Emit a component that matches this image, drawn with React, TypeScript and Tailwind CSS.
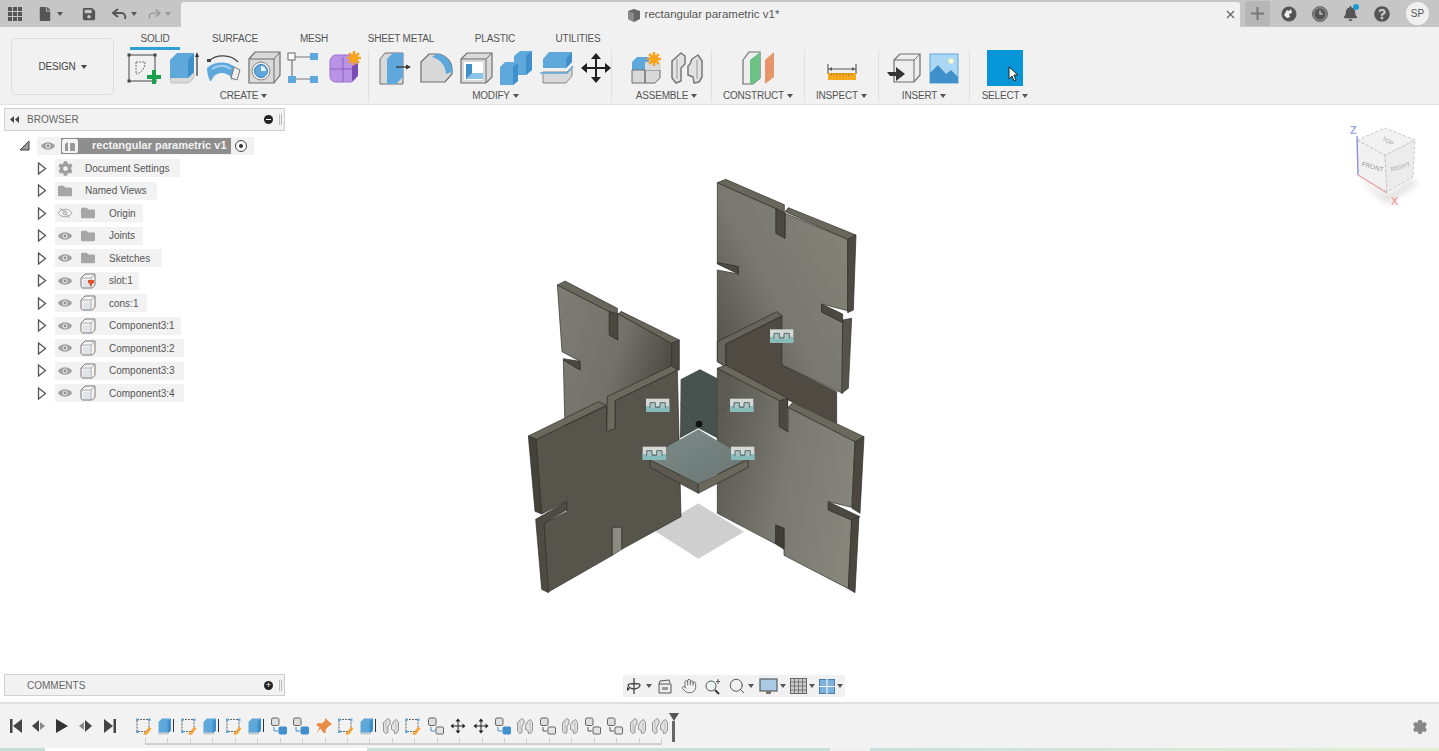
import { Hand, Search, Settings } from "lucide-react";
import { FaBell, FaCog, FaFile, FaFolder, FaQuestionCircle, FaSave } from "react-icons/fa";
import type { ReactNode } from "react";

const BLUE = "#5fa8dc";
const BLUE_D = "#3f8fcb";
const GRAY = "#d9d9d9";
const EDGE = "#6e6e6e";

function Icon({ children, size = 36 }: { children: ReactNode; size?: number }) {
  return (
    <svg width={size} height={size} viewBox="0 0 36 36" className="shrink-0">
      {children}
    </svg>
  );
}

function Caret({ className = "border-t-[#555]" }: { className?: string }) {
  return <span className={`inline-block w-0 h-0 border-x-[3px] border-x-transparent border-t-[4px] ${className}`} />;
}

const Star = ({ x, y, r = 6 }: { x: number; y: number; r?: number }) => (
  <g>
    {[0, 45, 90, 135].map((a) => (
      <rect key={a} x={x - r} y={y - 1.2} width={r * 2} height={2.4} fill="#f6a21c" transform={`rotate(${a} ${x} ${y})`} />
    ))}
    <circle cx={x} cy={y} r={r * 0.62} fill="#f9a51e" />
  </g>
);

/* ribbon icons */
const SketchIcon = () => (
  <Icon>
    <rect x="3" y="5" width="26" height="26" fill="none" stroke="#555" strokeWidth="1.1" />
    {[[3, 5], [29, 5], [3, 31], [29, 31]].map(([x, y]) => (
      <rect key={`${x}${y}`} x={x - 1.5} y={y - 1.5} width="3" height="3" fill="#444" />
    ))}
    <path d="M10 12h9M10 12v12M19 12c0 7-4 11-9 12" fill="none" stroke="#777" strokeWidth="1" strokeDasharray="2 1" />
    <path d="M26 20h4v5h5v4h-5v5h-4v-5h-5v-4h5z" fill="#17a24a" />
  </Icon>
);
const ExtrudeIcon = () => (
  <Icon>
    <path d="M4 28l1 5h17l6-5v-6z" fill={GRAY} stroke="#aaa" strokeWidth=".6" />
    <path d="M4 10l7-7h17v19l-6 6H4z" fill={BLUE} />
    <path d="M22 10l6-7v19l-6 6z" fill={BLUE_D} />
    <path d="M31 26V5" stroke="#333" strokeWidth="1.2" />
    <path d="M29 7l2-5 2 5z" fill="#333" />
  </Icon>
);
const SweepIcon = () => (
  <Icon>
    <path d="M3 11c7-7 22-7 29 1" fill="none" stroke="#444" strokeWidth="1.2" />
    <rect x="1" y="9" width="4" height="3" fill="#444" />
    <path d="M1 18c8-7 20-7 28-1l-3 14-2-5c-5-4-11-4-16 0l-3 5H4c-2-4-3-9-3-13z" fill={BLUE} />
    <path d="M6 19c6-4 13-4 19 0" fill="none" stroke="#a5d2f0" strokeWidth="2" />
    <path d="M28 17l6 3-3 10-6-2z" fill="#eee" stroke="#777" strokeWidth="1" />
  </Icon>
);
const HoleIcon = () => (
  <Icon>
    <path d="M3 9l6-7h25v23l-6 8H3z" fill={GRAY} stroke={EDGE} strokeWidth="1.2" />
    <path d="M3 9h25l6-7M28 9v24" fill="none" stroke={EDGE} strokeWidth="1" />
    <circle cx="15" cy="21" r="9" fill="#eee" stroke="#888" />
    <circle cx="15" cy="21" r="6.5" fill={BLUE} stroke="#3d7fb0" />
    <path d="M15 16a5 5 0 0 1 5 5h-5z" fill="#e8f2fa" />
  </Icon>
);
const FormIcon = () => (
  <Icon>
    <path d="M9 7h15M6 10v16M9 29h15" stroke="#777" strokeWidth="1.2" />
    <rect x="2" y="3" width="7" height="7" fill="#fff" stroke="#666" />
    <rect x="24" y="3" width="8" height="7" fill={BLUE} />
    <rect x="2" y="26" width="8" height="7" fill={BLUE} />
    <rect x="24" y="26" width="8" height="7" fill={BLUE} />
  </Icon>
);
const SolidFormIcon = () => (
  <Icon>
    <path d="M4 11c0-3 3-6 6-6h16c2 0 4 2 4 5v16c0 3-3 6-6 6H10c-4 0-6-3-6-6z" fill="#b993e6" stroke="#9a6fd0" />
    <path d="M4 19h26M17 7v25" stroke="#8a5ec4" strokeWidth="1" />
    <path d="M26 16l6-3v13l-6 5z" fill="#7a4bb5" />
    <Star x={28} y={8} r={7} />
  </Icon>
);
const PressPullIcon = () => (
  <Icon>
    <path d="M2 9l5-6h18v31H2z" fill={GRAY} stroke={EDGE} />
    <path d="M9 9l6-6h10v24l-7 7H9z" fill={BLUE} />
    <path d="M18 17h11" stroke="#333" strokeWidth="1.3" />
    <path d="M28 14.5l5 2.5-5 2.5z" fill="#333" />
  </Icon>
);
const FilletIcon = () => (
  <Icon>
    <path d="M3 12l8-8h10c8 2 13 9 13 15v5l-7 8H3z" fill={GRAY} stroke={EDGE} strokeWidth="1.2" />
    <path d="M18 4h3c8 2 13 9 13 15v3l-6 2c0-7-5-15-14-17z" fill={BLUE} />
  </Icon>
);
const ShellIcon = () => (
  <Icon>
    <path d="M3 9l6-6h25v24l-6 6H3z" fill={GRAY} stroke={EDGE} strokeWidth="1.2" />
    <path d="M3 9h25l6-6M28 9v24" fill="none" stroke={EDGE} />
    <rect x="6" y="12" width="19" height="18" fill="#fff" />
    <path d="M8 14h6v9h11v6H8z" fill={BLUE_D} />
    <path d="M14 23h11v6H8z" fill="#8cc3eb" />
  </Icon>
);
const CombineIcon = () => (
  <Icon>
    <path d="M2 17l5-5h9V6l6-5h12v19l-6 5h-8v6l-5 4H2z" fill={BLUE} />
    <path d="M28 6l6-5v19l-6 5z" fill={BLUE_D} />
    <path d="M15 17l5-4v18l-5 4z" fill={BLUE_D} />
  </Icon>
);
const SplitIcon = () => (
  <Icon>
    <path d="M5 22h24l5-5v9l-6 7H5z" fill={GRAY} stroke="#888" />
    <path d="M29 22l5-5" stroke="#888" />
    <path d="M5 9l6-7h23v10l-6 6H5z" fill={BLUE} />
    <path d="M28 9l6-7v10l-6 6z" fill={BLUE_D} />
    <path d="M2 23h27l6-7" fill="none" stroke={BLUE} strokeWidth="1.4" />
  </Icon>
);
const MoveIcon = ({ s = 1 }: { s?: number }) => (
  <Icon size={36 * s}>
    <path d="M18 6v24M6 18h24" stroke="#222" strokeWidth="2" />
    <path d="M18 3l5 6H13zM18 33l5-6H13zM3 18l6-5v10zM33 18l-6-5v10z" fill="#222" />
  </Icon>
);
const ComponentNew = () => (
  <Icon>
    <path d="M3 12l5-5h12v13H3z" fill={BLUE} />
    <path d="M3 20h13v13H3zM16 20h15v8l-5 5H16z" fill={GRAY} stroke={EDGE} />
    <path d="M16 12h13l3 3v5H16z" fill={GRAY} />
    <Star x={25} y={9} r={7} />
  </Icon>
);
const JointIcon = ({ s = 1 }: { s?: number }) => (
  <Icon size={36 * s}>
    <path d="M3 11L12 3l4 3v8l-4 4v13l-5 2-4-5z" fill="#e2e2e2" stroke="#777" strokeWidth="1.5" strokeLinejoin="round" />
    <path d="M33 11l-4-6-6 4-2 5-2 2v9l5 2 1 6 5-1 3-5z" fill="#e2e2e2" stroke="#777" strokeWidth="1.5" strokeLinejoin="round" />
    <path d="M8 9v20M28 10v19" stroke="#999" strokeWidth="1" />
  </Icon>
);
const PlaneIcon = () => (
  <Icon>
    <path d="M3 10l6-8h11v26l-7 6H3z" fill="#eee" stroke={EDGE} strokeWidth="1.2" />
    <path d="M10 10l10-8v26l-7 6h-3z" fill="#6cc285" />
    <path d="M25 10l9-8v25l-9 7z" fill="#e6956a" />
  </Icon>
);
const RulerIcon = () => (
  <Icon>
    <path d="M4 14v10M32 14v10M4 19h28" stroke="#555" strokeWidth="1.1" />
    <path d="M5 19l3-2v4zM31 19l-3-2v4z" fill="#555" />
    <rect x="4" y="23" width="28" height="7" fill="#f4a91f" />
    <path d="M7 23v3M10 23v2M13 23v3M16 23v2M19 23v3M22 23v2M25 23v3M28 23v2" stroke="#9a6a12" strokeWidth=".8" />
  </Icon>
);
const InsertIcon = () => (
  <Icon>
    <path d="M8 10l6-6h20v21l-6 7H8z" fill="#eee" stroke={EDGE} strokeWidth="1.2" />
    <path d="M8 10h20l6-6M28 10v22" fill="none" stroke={EDGE} />
    <path d="M1 22l9 0v-5l9 7-9 7v-5H4z" fill="#333" />
  </Icon>
);
const ImageIcon = () => (
  <Icon>
    <rect x="4" y="4" width="28" height="29" fill="#a9d7f4" stroke="#5fa8dc" />
    <circle cx="25" cy="11" r="2.6" fill="#fff6c8" />
    <path d="M4 33V23l8-8 8 9 5-4 7 7v6z" fill="#3f8fcb" />
  </Icon>
);

const groups = [
  { label: "CREATE", cls: "w-[245px] pr-[5px]", icons: [SketchIcon, ExtrudeIcon, SweepIcon, HoleIcon, FormIcon, SolidFormIcon] },
  { label: "MODIFY", cls: "w-[243px] pl-[11px]", icons: [PressPullIcon, FilletIcon, ShellIcon, CombineIcon, SplitIcon, MoveIcon] },
  { label: "ASSEMBLE", cls: "w-[100px] pl-[10px]", icons: [ComponentNew, JointIcon] },
  { label: "CONSTRUCT", cls: "w-[93px]", icons: [PlaneIcon] },
  { label: "INSPECT", cls: "w-[74px]", icons: [RulerIcon] },
  { label: "INSERT", cls: "w-[91px]", icons: [InsertIcon, ImageIcon] },
];

const tabs = [
  { name: "SOLID", cls: "w-[50px] text-[#3a9bd5] border-b-[3px] border-[#2f9fd8]" },
  { name: "SURFACE", cls: "w-[60px] ml-[25px]" },
  { name: "MESH", cls: "w-[40px] ml-[29px]" },
  { name: "SHEET METAL", cls: "w-[80px] ml-[27px]" },
  { name: "PLASTIC", cls: "w-[50px] ml-[29px]" },
  { name: "UTILITIES", cls: "w-[50px] ml-[33px]" },
];

function TopBar() {
  return (
    <div className="h-[27px] bg-[#c6c6c6] flex items-end shrink-0">
      <div className="w-[181px] h-[27px] flex items-center text-[#555]">
        <svg width="14" height="14" viewBox="0 0 14 14" className="ml-[8px]">
          {[0, 5, 10].map((x) => [0, 5, 10].map((y) => <rect key={`${x}-${y}`} x={x} y={y} width="4" height="4" fill="#555" />))}
        </svg>
        <FaFile className="ml-[17px] w-[12px] h-[14px]" />
        <span className="ml-[6px] flex"><Caret /></span>
        <FaSave className="ml-[19px] w-[14px] h-[14px]" />
        <svg width="16" height="12" viewBox="0 0 16 12" className="ml-[16px]"><path d="M6 1L1 5l5 4M1 5h8c3 0 5 2 4 6" fill="none" stroke="#555" strokeWidth="2" /></svg>
        <span className="ml-[3px] flex"><Caret /></span>
        <svg width="14" height="12" viewBox="0 0 16 12" className="ml-[10px]"><path d="M10 1l5 4-5 4M15 5H7C4 5 2 7 3 11" fill="none" stroke="#999" strokeWidth="1.6" /></svg>
        <span className="ml-[4px] flex"><Caret className="border-t-[#999]" /></span>
      </div>
      <div className="w-[1059px] h-[25px] bg-[#f1f1f1] rounded-t-[3px] flex items-center relative">
        <div className="flex-1 flex justify-center items-center gap-[4px] pl-[5px]">
          <svg width="14" height="14" viewBox="0 0 14 14"><path d="M1 3l6-2 6 2v8l-6 3-6-3z" fill="#666" /><path d="M1 3l6 2v9l-6-3z" fill="#8b8b8b" /></svg>
          <span className="text-[11.5px] text-[#555]">rectangular parametric v1*</span>
        </div>
        <span className="w-[20px] flex justify-center">
          <svg width="9" height="9" viewBox="0 0 9 9"><path d="M1 1l7 7M8 1L1 8" stroke="#666" strokeWidth="1.3" /></svg>
        </span>
      </div>
      <div className="flex-1 h-[27px] flex items-center">
        <div className="ml-[5px] w-[25px] h-[25px] bg-[#b6b6b6] rounded-[2px] flex items-center justify-center">
          <svg width="13" height="13" viewBox="0 0 13 13"><path d="M6.5 0v13M0 6.5h13" stroke="#777" strokeWidth="2" /></svg>
        </div>
        <svg width="16" height="16" viewBox="0 0 16 16" className="ml-[11px]">
          <circle cx="8" cy="8" r="7.5" fill="#555" />
          <path d="M3 9l3-5 2 1 2-2 1 4-3 1 1 3-3 1z" fill="#eee" />
        </svg>
        <svg width="16" height="16" viewBox="0 0 16 16" className="ml-[15px]">
          <circle cx="8" cy="8" r="7.5" fill="#888" stroke="#666" />
          <circle cx="8" cy="8" r="5.5" fill="#555" />
          <path d="M8 4.5V8h3" fill="none" stroke="#ddd" strokeWidth="1.2" />
        </svg>
        <span className="ml-[15px] relative flex">
          <FaBell className="w-[15px] h-[15px] text-[#555]" />
          <span className="absolute -top-[2px] -right-[1px] w-[6px] h-[6px] rounded-full bg-[#1a9ad6]" />
        </span>
        <FaQuestionCircle className="ml-[16px] w-[16px] h-[16px] text-[#555]" />
        <div className="ml-[16px] w-[23px] h-[23px] rounded-full bg-[#f0f0f0] flex items-center justify-center text-[10px] text-[#555]">SP</div>
      </div>
    </div>
  );
}

function Ribbon() {
  return (
    <div className="h-[78px] bg-[#f1f1f1] border-b border-[#e2e2e2] flex shrink-0">
      <div className="ml-[11px] mt-[11px] w-[103px] h-[57px] border border-[#dcdcdc] rounded-[4px] flex items-center justify-center gap-[5px] text-[10px] tracking-[-0.2px] text-[#444]">
        DESIGN <Caret className="border-t-[#444]" />
      </div>
      <div className="ml-[10px] flex flex-col">
        <div className="flex ml-[6px] h-[23px]">
          {tabs.map((t) => (
            <div key={t.name} className={`h-[23px] pt-[5px] text-center text-[10px] tracking-[-0.2px] text-[#555] leading-[14px] ${t.cls}`}>
              {t.name}
            </div>
          ))}
        </div>
        <div className="flex h-[52px]">
          {groups.map((g) => (
            <div key={g.label} className={`flex flex-col items-center border-r border-[#e0e0e0] ${g.cls}`}>
              <div className="flex gap-[4px] h-[36px] items-center">
                {g.icons.map((Ic, i) => <Ic key={i} />)}
              </div>
              <div className="mt-[3px] flex items-center gap-[3px] text-[10px] tracking-[-0.2px] text-[#555] leading-[13px]">
                {g.label} <Caret />
              </div>
            </div>
          ))}
          <div className="w-[70px] flex flex-col items-center">
            <div className="w-[36px] h-[36px] shrink-0 bg-[#0696d7] relative">
              <svg width="13" height="17" viewBox="0 0 13 17" className="absolute left-[20px] top-[16px]">
                <path d="M2 1v12l3-3 2 5 2-1-2-5h4z" fill="#fff" stroke="#222" strokeWidth="1" />
              </svg>
            </div>
            <div className="mt-[3px] flex items-center gap-[3px] text-[10px] tracking-[-0.2px] text-[#555] leading-[13px]">
              SELECT <Caret />
            </div>
          </div>
        </div>
      </div>
    </div>
  );
}

const Eye = ({ off = false }: { off?: boolean }) => (
  <svg width="16" height="10" viewBox="0 0 16 10" className="shrink-0">
    {off ? (
      <>
        <path d="M1 5c3-5 11-5 14 0-3 5-11 5-14 0z" fill="none" stroke="#aaa" />
        <circle cx="8" cy="5" r="2" fill="none" stroke="#aaa" />
        <path d="M3 0l10 10" stroke="#aaa" />
      </>
    ) : (
      <>
        <path d="M1 5c3-5 11-5 14 0-3 5-11 5-14 0z" fill="#a0a0a0" />
        <circle cx="8" cy="5" r="2.5" fill="#e8e8e8" />
        <circle cx="8" cy="5" r="1.4" fill="#909090" />
      </>
    )}
  </svg>
);

const Expand = () => (
  <svg width="10" height="13" viewBox="0 0 10 13" className="shrink-0">
    <path d="M1.5 1l7 5.5-7 5.5z" fill="#fff" stroke="#555" strokeWidth="1.3" />
  </svg>
);

const CompCube = ({ pin = false }: { pin?: boolean }) => (
  <svg width="16" height="16" viewBox="0 0 16 16" className="shrink-0">
    <path d="M1 5l4-4h10v10c0 2-2 4-4 4H3c-1 0-2-1-2-2z" fill="#f4f4f4" stroke="#777" />
    <path d="M1 5h10v10M11 5l4-4" fill="none" stroke="#999" strokeWidth=".8" />
    <rect x="3" y="7" width="7" height="7" fill="#dfe4ea" />
    {pin && <path d="M8 7h6v3l-2 1v2h-2v-2L8 10z" fill="#e0532b" />}
  </svg>
);

const Folder = () => <FaFolder className="w-[16px] h-[14px] text-[#a6a6a6] shrink-0" />;

const rows: { label: string; w: string; eye?: "on" | "off"; icon: ReactNode }[] = [
  { label: "Document Settings", w: "w-[125px]", icon: <FaCog className="w-[15px] h-[15px] text-[#a0a0a0] shrink-0" /> },
  { label: "Named Views", w: "w-[102px]", icon: <Folder /> },
  { label: "Origin", w: "w-[88px]", eye: "off", icon: <Folder /> },
  { label: "Joints", w: "w-[88px]", eye: "on", icon: <Folder /> },
  { label: "Sketches", w: "w-[107px]", eye: "on", icon: <Folder /> },
  { label: "slot:1", w: "w-[84px]", eye: "on", icon: <CompCube pin /> },
  { label: "cons:1", w: "w-[92px]", eye: "on", icon: <CompCube /> },
  { label: "Component3:1", w: "w-[126px]", eye: "on", icon: <CompCube /> },
  { label: "Component3:2", w: "w-[129px]", eye: "on", icon: <CompCube /> },
  { label: "Component3:3", w: "w-[129px]", eye: "on", icon: <CompCube /> },
  { label: "Component3:4", w: "w-[129px]", eye: "on", icon: <CompCube /> },
];

function BrowserPanel() {
  return (
    <div className="absolute left-[4px] top-[3px] w-[281px] flex flex-col">
      <div className="h-[23px] bg-[#f2f2f2] border border-[#cfcfcf] flex items-center text-[10px] text-[#666]">
        <svg width="9" height="7" viewBox="0 0 9 7" className="ml-[5px]"><path d="M4 0v7L0 3.5zM9 0v7L5 3.5z" fill="#444" /></svg>
        <span className="ml-[8px] flex-1">BROWSER</span>
        <span className="w-[9px] h-[9px] rounded-full bg-[#222] flex items-center justify-center"><span className="w-[5px] h-[1px] bg-white" /></span>
        <span className="ml-[6px] mr-[2px] w-[3px] h-[11px] border-l border-r border-[#bbb]" />
      </div>
      {/* root node */}
      <div className="mt-[3px] h-[23px] flex items-center">
        <svg width="11" height="11" viewBox="0 0 11 11" className="ml-[15px]"><path d="M10 1v9H1z" fill="#999" stroke="#444" /></svg>
        <div className="ml-[7px] w-[217px] h-[18px] bg-[#f2f2f2] flex items-center">
          <span className="ml-[3px]"><Eye /></span>
          <div className="ml-[5px] w-[170px] h-[16px] bg-[#8e8e8e] flex items-center">
            <span className="ml-[1px] w-[16px] h-[14px] bg-[#f4f4f4] rounded-[2px] flex items-center justify-center">
              <svg width="12" height="12" viewBox="0 0 12 12"><path d="M1 4l3-2v9H1zM6 3h4l1 1v7H6z" fill="#999" /></svg>
            </span>
            <span className="ml-[14px] text-[11px] font-bold text-[#f2f2f2] whitespace-nowrap">rectangular parametric v1</span>
          </div>
          <svg width="14" height="14" viewBox="0 0 14 14" className="ml-[3px]"><circle cx="7" cy="7" r="5.5" fill="#fff" stroke="#444" /><circle cx="7" cy="7" r="2" fill="#333" /></svg>
        </div>
      </div>
      {rows.map((r) => (
        <div key={r.label} className="h-[22.5px] flex items-center">
          <span className="ml-[33px] flex"><Expand /></span>
          <div className={`ml-[8px] h-[18px] bg-[#f2f2f2] flex items-center text-[10px] text-[#555] ${r.w}`}>
            {r.eye ? (
              <>
                <span className="ml-[2px] flex"><Eye off={r.eye === "off"} /></span>
                <span className="ml-[7px] w-[16px] flex justify-center">{r.icon}</span>
                <span className="ml-[13px] whitespace-nowrap">{r.label}</span>
              </>
            ) : (
              <>
                <span className="ml-[2px] w-[16px] flex justify-center">{r.icon}</span>
                <span className="ml-[12px] whitespace-nowrap">{r.label}</span>
              </>
            )}
          </div>
        </div>
      ))}
    </div>
  );
}

const JointMark = ({ x, y }: { x: number; y: number }) => (
  <g transform={`translate(${x} ${y})`}>
    <rect width="70" height="40" fill="#d4d9d8" />
    <rect y="22" width="70" height="18" fill="#86bdbb" />
    <path d="M12 28V12h16v14h14V12h16v16" fill="#a9c4c3" stroke="#5b6a6a" strokeWidth="3" />
  </g>
);

/* coordinates are in 3x pixels, the picture's crop at 520,170 */
function Model() {
  const outline = { stroke: "#2b2a26", strokeWidth: 2, strokeLinejoin: "round" as const };
  return (
    <svg width="350" height="430" viewBox="0 0 1050 1290" className="absolute left-[520px] top-[65px]">
      <defs>
        <linearGradient id="backFace" x1="1" y1="0.1" x2="0.1" y2="0.9">
          <stop offset="0" stopColor="#84847a" />
          <stop offset="0.6" stopColor="#787870" />
          <stop offset="1" stopColor="#55534b" />
        </linearGradient>
        <linearGradient id="backLeft" x1="0" y1="0.2" x2="1" y2="0.6">
          <stop offset="0" stopColor="#7c7c74" />
          <stop offset="0.55" stopColor="#72726a" />
          <stop offset="1" stopColor="#4a4a42" />
        </linearGradient>
        <linearGradient id="frontRight" x1="0" y1="0.3" x2="1" y2="0.6">
          <stop offset="0" stopColor="#5c5a52" />
          <stop offset="0.5" stopColor="#7a7a72" />
          <stop offset="1" stopColor="#85857c" />
        </linearGradient>
        <linearGradient id="floorTop" x1="0" y1="0" x2="1" y2="1">
          <stop offset="0" stopColor="#7e8c8a" />
          <stop offset="1" stopColor="#687573" />
        </linearGradient>
      </defs>

      {/* floor shadow */}
      <path d="M400 1080L535 1000 672 1085 535 1166z" fill="#cfcfcf" />

      {/* back right plate */}
      <path d="M592 38L768 116V190L795 205V130L983 208V422L905 402V426L968 458V670L785 585V440L617 520V590L592 575V300L655 312V290L592 278z" fill="url(#backFace)" {...outline} />
      <path d="M592 38L617 28 793 104V125L795 130 768 116zM795 125L805 113 1008 195 983 208z" fill="#69665b" {...outline} />
      <path d="M983 208L1008 195 1000 420 983 428z" fill="#4c4a42" {...outline} />
      <path d="M768 116L795 130V205L768 190z" fill="#4b4840" {...outline} />
      <path d="M592 278L655 290V312L592 282z" fill="#4b4840" {...outline} />
      <path d="M968 450L995 445 985 655 965 670z" fill="#55534a" {...outline} />
      <path d="M905 402L968 432V458L905 426z" fill="#4b4840" {...outline} />

      {/* perpendicular inner plate */}
      <path d="M617 522L785 440V585L950 665V760L617 600z" fill="#4f4b43" {...outline} />
      <path d="M592 515L770 425 787 437 617 522V590L592 575z" fill="#66635a" {...outline} />

      {/* back left plate */}
      <path d="M112 345L268 425V495L293 510V430L455 520V640L260 720V780H135L130 570 180 600V574L126 545z" fill="url(#backLeft)" {...outline} />
      <path d="M112 345L135 333 292 415V432L268 425zM295 432L303 424 478 510 455 520z" fill="#69665b" {...outline} />
      <path d="M268 425L293 432V510L268 495z" fill="#4b4840" {...outline} />
      <path d="M455 520L478 510V600L455 600z" fill="#4b4840" {...outline} />
      <path d="M130 566L180 574V600L130 570z" fill="#4b4840" {...outline} />

      {/* gap behind the floor plate */}
      <path d="M482 628L540 598 592 625V805L535 775 480 805z" fill="#48534f" />

      {/* front left plate */}
      <path d="M48 808L260 708V785L285 775V692L472 600 483 1040 305 1138V1072L277 1072V1156L85 1266 72 1060 140 1025V995L65 1032z" fill="#57544b" {...outline} />
      <path d="M25 798L235 695 258 706 48 808zM262 680L455 587 472 600 285 692V775L260 785z" fill="#6b685d" {...outline} />
      <path d="M25 798L48 808 65 1032 45 1024z" fill="#45423a" {...outline} />
      <path d="M47 1048L140 995V1020L72 1060 85 1268 65 1258z" fill="#4e4b42" {...outline} />
      <path d="M277 1072L305 1072V1138L277 1156z" fill="#8b8b82" {...outline} />

      {/* front right plate */}
      <path d="M592 595L778 692V770L805 785V712L1005 815 995 1012 925 995V1020L995 1050 985 1256 792 1156V1075L767 1065V1122L592 1030z" fill="url(#frontRight)" {...outline} />
      <path d="M592 595L617 585 803 685V712L778 692zM805 712L817 698 1032 800 1005 815z" fill="#6b685d" {...outline} />
      <path d="M778 692L803 685V785L778 770z" fill="#4b4840" {...outline} />
      <path d="M1005 815L1032 800 1020 1030 996 1015z" fill="#4a473f" {...outline} />
      <path d="M925 995L1020 1040 995 1050 925 1020z" fill="#4b4840" {...outline} />
      <path d="M995 1050L1017 1040 1005 1268 985 1256z" fill="#4a473f" {...outline} />
      <path d="M767 1065L792 1075V1138L767 1122z" fill="#3f3d36" {...outline} />

      {/* floor plate sits in front of the inner corners */}
      <path d="M438 832L535 778 680 865 535 942 390 870z" fill="url(#floorTop)" />
      <path d="M390 870L535 942V970L390 892z" fill="#5c5a50" {...outline} />
      <path d="M535 942L685 868V892L535 970z" fill="#6a675c" {...outline} />
      <path d="M440 830L537 762 640 700M537 762L640 835M537 762L480 700" stroke="#38403e" strokeWidth="1.5" strokeDasharray="8 5" fill="none" />
      <circle cx="537" cy="762" r="10" fill="#111" />

      <JointMark x={750} y={478} />
      <JointMark x={378} y={686} />
      <JointMark x={630} y={686} />
      <JointMark x={368} y={830} />
      <JointMark x={633} y={830} />
    </svg>
  );
}

function ViewCube() {
  return (
    <svg width="80" height="90" viewBox="0 0 80 90" className="absolute left-[1345px] top-[16px]">
      <path d="M14 58l28 16 26-16 4 5-30 20z" fill="#dedede" className="blur-[3px]" />
      <path d="M12 19l28 15 2 37-29-17z" fill="#f1f1f1" stroke="#bdbdbd" strokeDasharray="3 2" strokeWidth=".8" />
      <path d="M40 34l30-15-2 37-26 15z" fill="#ececec" stroke="#bdbdbd" strokeDasharray="3 2" strokeWidth=".8" />
      <path d="M12 19L40 7l30 12-30 15z" fill="#f2f2f2" stroke="#bdbdbd" strokeDasharray="3 2" strokeWidth=".8" />
      <text x="42" y="22" fontSize="6" fill="#aaa" textAnchor="middle" transform="rotate(30 42 22)">TOP</text>
      <text x="27" y="48" fontSize="6.500" fill="#999" textAnchor="middle" transform="rotate(16 27 48)">FRONT</text>
      <text x="56" y="48" fontSize="6.500" fill="#aaa" textAnchor="middle" transform="rotate(-16 56 48)">RIGHT</text>
      <path d="M12 15l1 39" stroke="#8d8cea" strokeWidth="1.3" />
      <path d="M13 54l29 18" stroke="#efa3a3" strokeWidth="1.3" />
      <text x="5" y="13" fontSize="11" fontWeight="bold" fill="#a5a4f0">Z</text>
      <text x="46" y="84" fontSize="11" fontWeight="bold" fill="#f5a5a5">X</text>
    </svg>
  );
}

function NavBar() {
  return (
    <div className="absolute left-[623px] bottom-[5px] w-[222px] h-[22px] bg-[#f1f1f1] flex items-center text-[#555]">
      <svg width="18" height="18" viewBox="0 0 18 18" className="ml-[2px]">
        <path d="M9 1v16M3 8c0-2 12-2 12 0s-3 4-6 4-6-2-6-4z" fill="none" stroke="#444" strokeWidth="1.3" />
        <path d="M2 10l3 2-3 2z" fill="#333" />
      </svg>
      <span className="ml-[3px] flex"><Caret /></span>
      <svg width="16" height="15" viewBox="0 0 16 15" className="ml-[5px]">
        <path d="M2 5h12v9H2zM2 5l1-3 9-1 1 3" fill="#eee" stroke="#555" />
        <rect x="5" y="8" width="6" height="3" fill="#999" />
      </svg>
      <Hand size={16} strokeWidth={1.2} className="ml-[8px]" />
      <svg width="18" height="18" viewBox="0 0 18 18" className="ml-[7px]">
        <circle cx="7" cy="9" r="5" fill="#eef4f8" stroke="#555" />
        <path d="M11 13l4 4" stroke="#333" strokeWidth="2" />
        <path d="M14 2v5M12 4.500h4" stroke="#555" />
      </svg>
      <Search size={18} strokeWidth={1.3} className="ml-[6px]" />
      <span className="ml-[2px] flex"><Caret /></span>
      <svg width="19" height="17" viewBox="0 0 19 17" className="ml-[5px]">
        <rect x="1" y="1" width="17" height="12" fill="#a9cbe6" stroke="#666" strokeWidth="1.3" />
        <path d="M7 13h5v3H7z" fill="#777" />
      </svg>
      <span className="ml-[2px] flex"><Caret /></span>
      <svg width="17" height="16" viewBox="0 0 17 16" className="ml-[4px]">
        <rect x=".5" y=".5" width="16" height="15" fill="#ccc" stroke="#666" />
        <path d="M4.500 0v16M8.500 0v16M12.500 0v16M0 4h17M0 8h17M0 12h17" stroke="#666" strokeWidth=".8" />
      </svg>
      <span className="ml-[2px] flex"><Caret /></span>
      <svg width="16" height="15" viewBox="0 0 16 15" className="ml-[4px]">
        <rect x=".5" y=".5" width="15" height="14" fill="#7db1dc" stroke="#4b7fa8" />
        <path d="M8 0v15M0 7.500h16" stroke="#fff" />
      </svg>
      <span className="ml-[2px] flex"><Caret /></span>
    </div>
  );
}

const TlSketch = () => (
  <Icon size={18}>
    <rect x="4" y="5" width="24" height="24" fill="none" stroke="#666" strokeDasharray="4 2" strokeWidth="2" />
    <rect x="2" y="3" width="5" height="5" fill={BLUE} />
    <rect x="26" y="3" width="5" height="5" fill={BLUE} />
    <rect x="2" y="27" width="5" height="5" fill={BLUE} />
    <path d="M18 32l10-12 5 3-9 12-7 1z" fill="#f3a53a" />
  </Icon>
);
const TlExtrude = () => (
  <Icon size={18}>
    <path d="M3 10l7-7h18v24l-6 6H3z" fill={BLUE} />
    <path d="M21 10l7-7v24l-7 6z" fill={BLUE_D} />
    <path d="M3 31h20v4H3z" fill="#ccc" />
    <path d="M33 4v26" stroke="#333" strokeWidth="2" />
  </Icon>
);
const TlComp = ({ tone }: { tone: "blue" | "gray" | "white" }) => (
  <Icon size={18}>
    <rect x="3" y="2" width="15" height="15" rx="3" fill="#ddd" stroke="#666" strokeWidth="2" />
    <path d="M8 20v8h8" fill="none" stroke={tone === "gray" ? "#555" : BLUE_D} strokeWidth="2" />
    <rect x="18" y="20" width="15" height="14" rx="2" fill={tone === "blue" ? BLUE_D : "#e4e4e4"} stroke={tone === "blue" ? BLUE_D : "#666"} strokeWidth="2" />
  </Icon>
);
const TlPin = () => (
  <Icon size={18}>
    <path d="M20 2l14 13-5 2-8 8 1 6-5 1-6-9-8 10 6-12-7-6 5-3 7 1 6-6z" fill="#e98a45" />
  </Icon>
);

const timeline: ReactNode[] = [
  <TlSketch />, <TlExtrude />, <TlSketch />, <TlExtrude />, <TlSketch />, <TlExtrude />,
  <TlComp tone="blue" />, <TlComp tone="blue" />, <TlPin />, <TlSketch />, <TlExtrude />, <JointIcon s={0.5} />,
  <TlSketch />, <TlComp tone="white" />, <MoveIcon s={0.5} />, <MoveIcon s={0.5} />, <TlComp tone="blue" />, <JointIcon s={0.5} />,
  <TlComp tone="gray" />, <JointIcon s={0.5} />, <TlComp tone="gray" />, <TlComp tone="gray" />, <JointIcon s={0.5} />, <JointIcon s={0.5} />,
];

function Timeline() {
  return (
    <div className="h-[46px] bg-[#f2f2f2] border-t-2 border-[#dedede] flex items-start relative shrink-0">
      <div className="mt-[15px] ml-[10px] flex items-center text-[#444]">
        <svg width="12" height="14" viewBox="0 0 12 14"><path d="M0 0h2.500v14H0zM12 0v14L3 7z" fill="#444" /></svg>
        <svg width="14" height="12" viewBox="0 0 14 12" className="ml-[10px]"><path d="M7 0v12L0 6z" fill="#444" /><path d="M8 2l5 4-5 4z" fill="#888" /></svg>
        <svg width="12" height="14" viewBox="0 0 12 14" className="ml-[10px]"><path d="M0 0l12 7-12 7z" fill="#333" /></svg>
        <svg width="14" height="12" viewBox="0 0 14 12" className="ml-[10px]"><path d="M7 0v12l7-6z" fill="#444" /><path d="M6 2L1 6l5 4z" fill="#888" /></svg>
        <svg width="12" height="14" viewBox="0 0 12 14" className="ml-[12px]"><path d="M9.500 0H12v14H9.500zM0 0v14l9-7z" fill="#444" /></svg>
      </div>
      <div className="ml-[19px] mt-[13px] flex flex-col">
        <div className="flex gap-[4.45px]">
          {timeline.map((ic, i) => <span key={i} className="flex w-[18px] h-[18px]">{ic}</span>)}
        </div>
        <div className="mt-[3px] ml-[10px] h-[7px] w-[517px] border-b-2 border-[#cfcfcf] flex">
          {timeline.slice(1).map((_, i) => (
            <span key={i} className="flex-1 border-l border-[#cfcfcf] h-[5px] last:border-r" />
          ))}
        </div>
      </div>
      {/* playhead */}
      <div className="absolute left-[668px] top-[9px] flex flex-col items-center w-[11px]">
        <span className="w-0 h-0 border-x-[5.5px] border-x-transparent border-t-[8px] border-t-[#555]" />
        <span className="w-[3px] h-[21px] bg-[#666]" />
      </div>
      <Settings size={16} fill="#888" stroke="#888" className="absolute right-[11px] top-[15px]" />
    </div>
  );
}

export default function App() {
  return (
    <div className="w-[1439px] h-[751px] overflow-hidden flex flex-col font-['Liberation_Sans',Arial,sans-serif]">
      <TopBar />
      <Ribbon />
      <div className="relative flex-1 bg-white">
        <BrowserPanel />
        <Model />
        <ViewCube />
        <NavBar />
        <div className="absolute left-[4px] bottom-[6px] w-[281px] h-[22px] bg-[#f2f2f2] border border-[#cfcfcf] flex items-center text-[10px] text-[#666]">
          <span className="ml-[22px] flex-1">COMMENTS</span>
          <span className="w-[9px] h-[9px] rounded-full bg-[#222] flex items-center justify-center text-white text-[9px] leading-none">+</span>
          <span className="ml-[6px] mr-[2px] w-[3px] h-[11px] border-l border-r border-[#bbb]" />
        </div>
      </div>
      <Timeline />
      <div className="h-[3px] flex shrink-0">
        <span className="w-[45px] bg-[#c6dcd9]" />
        <span className="w-[322px] bg-white" />
        <span className="w-[463px] bg-[#c8dfdc]" />
        <span className="w-[40px] bg-[#f0f0f0]" />
        <span className="flex-1 bg-gradient-to-r from-[#c8dfdc] to-[#e2f0d2]" />
      </div>
    </div>
  );
}
